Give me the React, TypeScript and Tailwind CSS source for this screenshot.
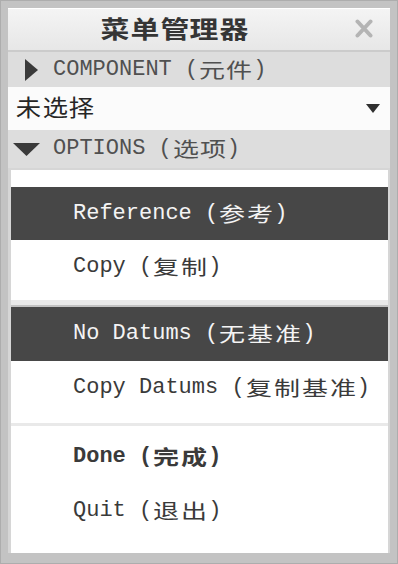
import React from "react";

const isCJK = (c: string) => c.charCodeAt(0) >= 0x2e80;

function Mixed({
  text,
  box,
  inner,
}: {
  text: string;
  box: string;
  inner: string;
}) {
  const parts: React.ReactNode[] = [];
  let buf = "";
  let k = 0;
  const flush = () => {
    if (buf) {
      parts.push(
        <span key={k++} className="whitespace-pre">
          {buf}
        </span>
      );
      buf = "";
    }
  };
  for (const ch of text) {
    if (isCJK(ch)) {
      flush();
      parts.push(
        <span key={k++} className={box}>
          <span className={inner}>{ch}</span>
        </span>
      );
    } else {
      buf += ch;
    }
  }
  flush();
  return <>{parts}</>;
}

const MENU_BOX =
  "inline-block w-[28px] text-center font-['Noto_Sans_CJK_SC',sans-serif] text-[20px]";
const MENU_INNER = "inline-block scale-x-[1.3]";

function Item({
  text,
  dark,
  bold,
  h,
}: {
  text: string;
  dark?: boolean;
  bold?: boolean;
  h: string;
}) {
  return (
    <div
      className={`${h} flex items-center pl-[62px] text-[22px] leading-none ${
        dark ? "bg-[#474747] text-[#f4f4f4]" : "text-[#3a3a3a]"
      } ${bold ? "font-bold" : "font-normal"}`}
    >
      <Mixed text={text} box={MENU_BOX} inner={MENU_INNER} />
    </div>
  );
}

export default function App() {
  return (
    <div className="w-[398px] h-[564px] bg-[#c3c3c3] border border-[#adadad] pt-[7px] pl-[7px] pr-[7px] pb-[10px] flex flex-col font-['Liberation_Mono','Noto_Sans_CJK_SC',monospace]">
      <div className="flex-1 flex flex-col bg-[#d6d6d6]">
        {/* Title */}
        <div className="h-[42px] flex items-center bg-gradient-to-b from-[#f4f4f4] to-[#e7e7e7] border-t border-white">
          <div className="flex-1 flex justify-center pr-[14px] pb-[3px] text-[#353535] font-bold text-[24px] leading-none">
            <Mixed
              text="菜单管理器"
              box="inline-block w-[29.6px] text-center font-['Noto_Sans_CJK_SC',sans-serif] font-bold"
              inner="inline-block scale-x-[1.2]"
            />
          </div>
          <svg
            className="mr-[17px] mb-[2px]"
            width="18"
            height="19"
            viewBox="0 0 18 19"
          >
            <path
              d="M2.5 2.5 L15.5 16.5 M15.5 2.5 L2.5 16.5"
              stroke="#b4b4b4"
              strokeWidth="4"
              strokeLinecap="round"
            />
          </svg>
        </div>
        <div className="h-[2px] bg-[#cbcbcb]" />
        {/* COMPONENT */}
        <div className="h-[35px] bg-[#dddddd] flex items-center pl-[17px] text-[#505050] text-[22px] leading-none">
          <svg width="13" height="22" viewBox="0 0 13 22" className="mr-[15px]">
            <path d="M0 0 L13 11 L0 22 Z" fill="#3a3a3a" />
          </svg>
          <Mixed
            text="COMPONENT (元件)"
            box="inline-block w-[27.5px] text-center font-['Noto_Sans_CJK_SC',sans-serif] text-[20px]"
            inner="inline-block scale-x-[1.3]"
          />
        </div>
        {/* Dropdown */}
        <div className="h-[43px] bg-[#fbfbfb] flex items-center pl-[7px] pr-[10px] text-[#262626] text-[23px] leading-none">
          <div className="flex-1">
            <Mixed
              text="未选择"
              box="inline-block w-[26.7px] text-center font-['Noto_Sans_CJK_SC',sans-serif]"
              inner="inline-block scale-x-[1.1]"
            />
          </div>
          <svg width="14" height="9" viewBox="0 0 14 9">
            <path d="M0 0 L14 0 L7 9 Z" fill="#2f2f2f" />
          </svg>
        </div>
        {/* OPTIONS */}
        <div className="h-[38px] bg-[#dddddd] flex items-center pl-[5px] text-[#505050] text-[22px] leading-none">
          <svg width="27" height="13" viewBox="0 0 27 13" className="mr-[13px]">
            <path d="M0 0 L27 0 L13.5 13 Z" fill="#3a3a3a" />
          </svg>
          <Mixed
            text="OPTIONS (选项)"
            box="inline-block w-[27.5px] text-center font-['Noto_Sans_CJK_SC',sans-serif] text-[20px]"
            inner="inline-block scale-x-[1.3]"
          />
        </div>
        {/* Menu box */}
        <div className="flex-1 ml-[3px] mr-[2px] mt-[2px] bg-white flex flex-col">
          <div className="h-[17px]" />
          <Item text="Reference (参考)" dark h="h-[53px]" />
          <Item text="Copy (复制)" h="h-[54px]" />
          <div className="h-[6px]" />
          <div className="h-[5px] bg-[#e9e9e9]" />
          <div className="h-[2px] bg-[#c2c2c2]" />
          <Item text="No Datums (无基准)" dark h="h-[54px]" />
          <Item text="Copy Datums (复制基准)" h="h-[54px]" />
          <div className="h-[8px]" />
          <div className="h-[3px] bg-[#e9e9e9]" />
          <div className="h-[4px]" />
          <Item text="Done (完成)" bold h="h-[54px]" />
          <Item text="Quit (退出)" h="h-[53px]" />
          <div className="flex-1" />
        </div>
      </div>
    </div>
  );
}
